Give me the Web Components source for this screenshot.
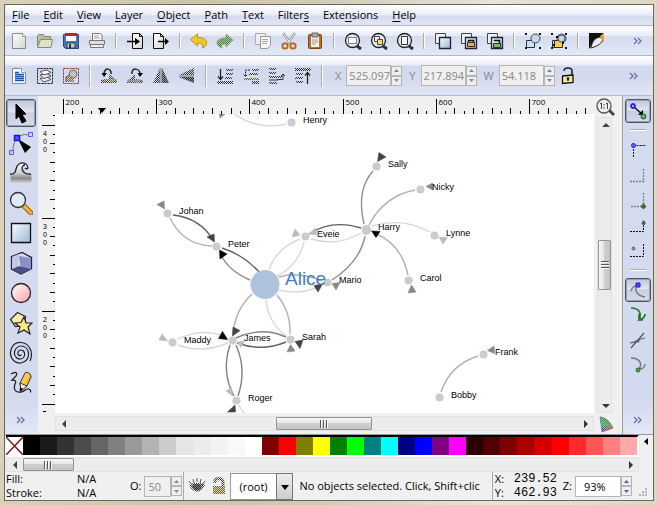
<!DOCTYPE html>
<html lang="en">
<head>
<meta charset="utf-8">
<title>Vector editor</title>
<style>
html{height:100%}
body{margin:0;height:100%;font:11px/16px "Open Sans","Noto Sans",sans-serif;color:#000;background:#c9bfa5}
</style>
</head>
<body>
<app-window></app-window>
<script>
const PAT = '<defs><pattern id="h" width="2" height="2" patternUnits="userSpaceOnUse"><path d="M0 0h1v1h-1zM1 1h1v1h-1z" fill="#333"/></pattern><pattern id="g" width="2" height="2" patternUnits="userSpaceOnUse"><path d="M0 0h2v2h-2z" fill="#a9c49c"/><path d="M0 0h1v1h-1zM1 1h1v1h-1z" fill="#4c8a3c"/></pattern><pattern id="y" width="2" height="2" patternUnits="userSpaceOnUse"><path d="M0 0h2v2h-2z" fill="#e5d8a5"/><path d="M0 0h1v1h-1zM1 1h1v1h-1z" fill="#6b6348"/></pattern></defs>';
const GR = '<defs><linearGradient id="b" x2="1" y2="1"><stop stop-color="#f8fcff"/><stop offset="1" stop-color="#9db8d6"/></linearGradient><linearGradient id="w" x2="1" y2="1"><stop stop-color="#fff"/><stop offset="1" stop-color="#d5d5d0"/></linearGradient><linearGradient id="o" x2="1" y2="1"><stop stop-color="#ffe680"/><stop offset="1" stop-color="#f09c10"/></linearGradient></defs>';
const LENS = '<path d="M14 15l4 3" stroke="#333" stroke-width="3"/><circle cx="9.500" cy="9.500" r="7" fill="#dbe9f6" stroke="#222" stroke-width="1.300"/>';
const DUP = '<path d="M2.500 2.500h10v10h-10z" fill="#e8f0f8" stroke="#444"/><path d="M6.500 6.500h11v11h-11z" fill="url(#b)" stroke="#223" stroke-width="1.300"/>';
const GRP = '<path d="M3.500 9.500h8v7h-8z" fill="#cfe0ee" stroke="#234"/><circle cx="12.500" cy="7.500" r="4.500" fill="#c4d8ea" stroke="#445"/><path d="M2 2h2v2H2zM16 2h2v2h-2zM2 16h2v2H2zM16 16h2v2h-2z" fill="#111"/>';
const DASH = 'fill="none" stroke="#111" stroke-dasharray="2 1"';
const ICONS = {
 new:'<path d="M3.500 2.500h10l3 3v12h-13z" fill="url(#w)" stroke="#8a8a88"/><path d="M13.500 2.500v3h3" fill="#fff" stroke="#999"/>',
 open:'<path d="M2.500 15V4.500l1-1h5l1 2h6v4" fill="#b9bea3" stroke="#858c70"/><path d="M5.500 8.500h12l-1.500 8H2.500z" fill="#dde0cd" stroke="#858c70"/>',
 save:'<path d="M2.500 3.500h15v14h-13l-2-2z" fill="#4277b0" stroke="#234b7c"/><path d="M4 2h12v3H4z" fill="#d01c1c"/><path d="M5 5h10v5H5z" fill="#fff"/><path d="M6 12h8v5H6z" fill="#ccc" stroke="#345"/><path d="M8 13h2v4H8z" fill="#234"/>',
 print:'<path d="M5.500 9V2.500h8l1.500 1.500V9" fill="#fff" stroke="#777"/><path d="M7 5h5M7 7h6" stroke="#999"/><path d="M2.500 9.500h15v4h-15z" fill="#ddd" stroke="#777"/><path d="M3.500 13.500h13v3h-13z" fill="#eee" stroke="#777"/>',
 import:'<path d="M7.500 2.500h7l3 3v12h-10z" fill="url(#w)" stroke="#111"/><path d="M14.500 2.500v3h3" fill="none" stroke="#111"/><path d="M2 10.500h9" stroke="#000" stroke-width="1.500"/><path d="M10 7l5 3.500L10 14z"/>',
 export:'<path d="M2.500 2.500h7l3 3v12h-10z" fill="url(#w)" stroke="#111"/><path d="M9.500 2.500v3h3" fill="none" stroke="#111"/><path d="M7 10.500h8" stroke="#000" stroke-width="1.500"/><path d="M14 7l4 3.500-4 3.500z"/>',
 undo:'<path d="M1.500 8.500L8.500 3v3.500c6 0 9 2 9 5.500 0 2-1.500 4-4 5 1-3-.5-5-5-5v3z" fill="#edca2c" stroke="#b8920c"/>',
 redo:'<path d="M18 9L11 3v4C5 7 2 9 2 12c0 2 2 4 5 5-1-3 0-4 4-4v3z" fill="url(#g)" stroke="#698c5c" stroke-width=".500"/>',
 copy:'<path d="M2.500 2.500h10v11h-10z" fill="#eee" stroke="#aaa"/><path d="M7.500 5.500h10v9l-3 3h-7z" fill="#f6f6f4" stroke="#999"/><path d="M9 8.500h6M9 10.500h6M9 12.500h5" stroke="#aaa"/>',
 cut:'<path d="M4 2l8 11M16 2L8 13" stroke="#999" stroke-width="2.500"/><path d="M4 2l8 11M16 2L8 13" stroke="#eee"/><rect x="3.500" y="12.500" width="5" height="5" rx="2" fill="none" stroke="#bb6d14" stroke-width="2"/><rect x="11.500" y="12.500" width="5" height="5" rx="2" fill="none" stroke="#bb6d14" stroke-width="2"/>',
 paste:'<rect x="3.500" y="3.500" width="13" height="14" rx="1" fill="#b8701c" stroke="#7d480e"/><path d="M6 5h8v11H6z" fill="#f3f3f0"/><path d="M7 2h6v4H7z" fill="#aaa" stroke="#666"/><path d="M7 9h6M7 11h6M7 13h4" stroke="#999"/>',
 zsel:LENS+'<path d="M5.500 6.500h8v6h-8z" fill="#fff" stroke="#111" stroke-dasharray="1 1"/>',
 zdraw:LENS+'<path d="M5.500 5.500h5v5h-5z" fill="#fff" stroke="#543"/><path d="M8.500 8.500h5v5h-5z" fill="#f8d868" stroke="#543"/>',
 zpage:LENS+'<path d="M6.500 5.500h6v8h-6z" fill="#fff" stroke="#333"/>',
 dup:DUP,
 clone:DUP+'<path d="M9.500 11V9.500h5V12" fill="none" stroke="#111" stroke-width="1.500"/><path d="M8.500 11.500h7v4h-7z" fill="#f5b020" stroke="#332"/>',
 unlink:DUP+'<path d="M9.500 10V9.500h5V12" fill="none" stroke="#111" stroke-width="1.500"/><path d="M8.500 12.500h7v4h-7z" fill="#7eba62" stroke="#232"/>',
 group:GRP,
 ungroup:GRP+'<path d="M5.500 9.500h8v7h-8z" fill="#f8cf4c" stroke="#332"/><circle cx="12.500" cy="7.500" r="3.500" fill="#c4d8ea" stroke="#445"/><path d="M7 5h2v2H7zM13 11h2v2h-2zM4 13h2v2H4z"/>',
 fill:'<path d="M2 2h15L6 12l-4 6z" fill="#111"/><path d="M4 17c1-7 4-10 9-11l3 3c-3 5-6 6-12 8z" fill="#e9ecec" stroke="#222"/><path d="M13 6l4-4v9z" fill="#f0a818"/>',
 page:'<path d="M3.500 2.500h9l4 4v11h-13z" fill="#f8fbff" stroke="#888"/><path d="M12.500 2.500v4h4" fill="#fff" stroke="#999"/><path d="M6 6.500h4M6 8.500h9M6 10.500h9M6 12.500h9M6 14.500h9" stroke="#1d55ac" stroke-width="1.300"/>',
 layers:'<path d="M2.500 2.500h15v15h-15z" '+DASH+'/><path d="M5 12.500l7-1.500 4 2.500-7 2.500z" fill="#eee" stroke="#555"/><path d="M5 9l7-1.500 4 2.500-7 2.500z" fill="#eee" stroke="#555"/><path d="M5 5.500L12 4l4 2.500L9 9z" fill="#fafafa" stroke="#555"/>',
 desel:'<path d="M2.500 2.500h15v15h-15z" fill="none" stroke="#922" stroke-dasharray="2 1"/><path d="M5 10h8v6H5z" fill="url(#y)"/><circle cx="12" cy="8" r="4" fill="#d8d8d8" stroke="#777"/><circle cx="12" cy="8" r="4" fill="url(#h)" opacity=".300"/><path d="M5 16v-5l4-2" fill="none" stroke="#555"/>',
 rccw:'<path d="M2 14l8-1v-5l8 7v2H2z" fill="url(#h)"/><path d="M3 13h15l-4 4z" fill="url(#y)"/><path d="M5 8c0-7 8-6 7 0" fill="none" stroke="#222" stroke-width="1.500"/><path d="M2.500 7H8l-3 4z"/>',
 rcw:'<path d="M18 14l-8-1V8l-8 7v2h16z" fill="url(#h)"/><path d="M2 14h15l-4 3z" fill="#999"/><path d="M7 8c-1-7 8-6 8 0" fill="none" stroke="#222" stroke-width="1.500"/><path d="M12.500 7H18l-3 4z"/>',
 fliph:'<path d="M9 2v15H2z" fill="url(#h)"/><path d="M11 2v15h7z" fill="#999"/><path d="M11 2v15h7z" fill="url(#h)"/><path d="M10 2v15" stroke="#777"/>',
 flipv:'<path d="M2 9L17 2v7z" fill="url(#h)"/><path d="M2 11h15v6z" fill="#888"/><path d="M2 10h15" stroke="#777"/><path d="M2 11h15v6z" fill="url(#h)"/>',
 lower:'<path d="M11 3h7v2h-7zM11 7h7v2h-7zM10 11h7v2h-7zM2 15h16v3H2z" fill="url(#h)"/><path d="M5.500 3v10M3 10.500l2.500 3 2.500-3" fill="none" stroke="#222" stroke-width="1.300"/>',
 down:'<path d="M11 3h7v2h-7zM8 7h9v2H8zM11 15h7v3h-7z" fill="url(#h)"/><path d="M3 12h15v2H3z" fill="url(#y)"/><path d="M9 4H4.500v6M2.500 8.500l2 2 2-2" fill="none" stroke="#222" stroke-dasharray="2 1"/>',
 up:'<path d="M2 2h7v2H2zM2 6h7v2H2zM2 10h13v2H2zM2 16h8v2H2z" fill="url(#h)"/><path d="M2 14h9M10 13.500h6V9M14 10l2-2 2 2" fill="none" stroke="#333"/>',
 raise:'<path d="M2 2h16v3H2zM3 7h7v2H3zM2 11h8v2H2zM3 15h7v2H3z" fill="url(#h)"/><path d="M14.500 18V7M12 9.500l2.500-3 2.500 3" fill="none" stroke="#222" stroke-width="1.300"/>',
 unlock:'<path d="M6 5c0-4 8-4 8 0v5" fill="none" stroke="#222" stroke-width="1.600"/><path d="M4.500 10l10.500-1v7.500l-10.500 1z" fill="#f6e6a8" stroke="#111" stroke-width="1.300"/><path d="M8.500 11.500h3l-1 3.500h-1z" fill="#111"/>',
 arrow:'<path d="M7 3l10 10-4 .500 4 6.500-4 2-3-7-3 3z" stroke="#000"/>',
 node:'<path d="M4 19C4 8 11 2 20 4" fill="none" stroke="#777"/><path d="M9 8l13 8-6 6z"/><path d="M5.500 4.500h5v5h-5z" fill="#4c58ff" stroke="#1414ee" stroke-width="1.500"/><path d="M19.500 1.500h4v4h-4zM.500 19.500h4v4h-4z" fill="#c7cbff" stroke="#5b5be8"/>',
 tweak:'<path d="M1.500 22.500V13c8 1 4-7 9-10 5-3 9 1 8 4-2-3-6-1-5 1 1 3 5 6 9 5v9.500z" fill="url(#tw)" stroke="none"/><path d="M1 13c8 1 4-7 9-10 5-3 9 1 9 4-1 1-2 1-3 0M22 13c-6 1-9-3-9-6 0-1 1-3 3-3" fill="none" stroke="#222" stroke-width="1.300"/><defs><linearGradient id="tw" x2="0" y2="1"><stop stop-color="#fff"/><stop offset=".500" stop-color="#ccc"/><stop offset=".750" stop-color="#888"/><stop offset="1" stop-color="#ddd"/></linearGradient></defs>',
 zoom:'<path d="M15 15l7 7" stroke="#8f5c0e" stroke-width="5" stroke-linecap="round"/><path d="M15 15l7 7" stroke="#f8b330" stroke-width="3" stroke-linecap="round"/><circle cx="9" cy="9" r="7.500" fill="#dfeaf8" stroke="#333" stroke-width="1.300"/>',
 rect:'<path d="M2.500 2.500h19v19h-19z" fill="url(#b)" stroke="#111" stroke-width="1.300"/>',
 cube:'<path d="M2.500 5.500L13 1.500l9.500 5v11L12 23l-9.500-5z" fill="#dcdff2" stroke="#223" stroke-width="1.300"/><path d="M10 5l12 2v11L12 21z" fill="#8d90c4"/><path d="M9.500 15L22 18l-10 5-9-5z" fill="#4b4e8c"/><path d="M9.500 3v12L3 18V6z" fill="#c4c7e8"/>',
 circle:'<circle cx="12" cy="12" r="9.500" fill="url(#pk)" stroke="#222" stroke-width="1.300"/><defs><linearGradient id="pk" x2="1" y2="1"><stop stop-color="#fff"/><stop offset="1" stop-color="#ff9eaa"/></linearGradient></defs>',
 star:'<path d="M8.500 1.500l8 4-1 9-9 1-5-7z" fill="#f5eab0" stroke="#222" stroke-width="1.200"/><path d="M15 6l2 6h6l-4 4 2 7-6-4-6 3 2-6-5-4 6-.500z" fill="#fbe986" stroke="#222" stroke-width="1.200"/>',
 spiral:'<path d="M21 20C25 11 20 2 12 1.500 5 1 1 7 1.500 13 2 19 7 22.500 12 22c5-.500 8-5 7.500-10C19 8 16 5 12 5c-4 0-7 4-6.500 8 .500 3 3 5.500 6 5 3-.500 4.500-3 4-6-.500-2-2-3-3.500-3-2 0-3.500 2-3 4 .500 2 3 2 3.500.500" fill="none" stroke="#222" stroke-width="1.200"/>',
 pencil:'<path d="M2 3c5-3 7-1 5 2L3 9c3 0 5 1 3 4-2 6 1 9 6 8 3 0 5-4 8-3 2 1 2 3 1 3" fill="none" stroke="#222" stroke-width="1.300"/><path d="M16 2c3-2 6 1 6 4l-4 9-6 4-1-7z" fill="url(#o)" stroke="#333"/><path d="M11 12l7 3-6 5z" fill="#fff3cc" stroke="#333"/><path d="M11.500 17l2 1-2.500 2z" stroke="#000"/>',
 z11:'<path d="M14 13l5 5" stroke="#444" stroke-width="3"/><circle cx="9" cy="9" r="7" fill="#eee" stroke="#555" stroke-width="1.300"/><path d="M5 7l1.500-1v6M11 7l1.500-1v6M9 7v1.500M9 10v1.500" fill="none" stroke="#444"/>',
 cms:'<path d="M5 3c6 0 10 5 13 11L7 18z" fill="#3b9b53"/><path d="M5 3l4 14-2 1z" fill="#38c1c8"/><path d="M10 12l8 2-8 3z" fill="#d33752"/><path d="M7 12l3 4-3 2z" fill="#434fc3"/><path d="M5 3c6 0 10 5 13 11L7 18z" fill="url(#cp)" stroke="#666" stroke-width=".600"/><defs><pattern id="cp" width="2" height="2" patternUnits="userSpaceOnUse"><path d="M0 0h1v1h-1zM1 1h1v1h-1z" fill="#ddd" opacity=".500"/></pattern></defs>',
 snap:'<path d="M6 6l9 8" stroke="#111" stroke-width="1.500"/><path d="M15 9v5h-5z"/><circle cx="5" cy="5" r="2" fill="#bcbcff" stroke="#2222e8" stroke-width="1.800"/><circle cx="15.500" cy="15.500" r="2" fill="#bfd8bf" stroke="#288438" stroke-width="1.800"/>',
 s1:'<path d="M5.500 4.500H18M5.500 5v12" '+DASH+'/><circle cx="5.500" cy="4.500" r="2" fill="#6464ff" stroke="#2222e0"/>',
 s2:'<path d="M15.500 3v12.500H2" fill="none" stroke="#6a8a6a" stroke-width="1.300" stroke-dasharray="2 1"/>',
 s3:'<path d="M15.500 2v13.500H2" fill="none" stroke="#788478" stroke-width="1.300" stroke-dasharray="2 1"/><path d="M15.500 12l3 3.500-3 3-3-3z" fill="#3f6a3f"/>',
 s4:'<path d="M2 15.500h13.500V5" '+DASH+'/><path d="M15.500 4l2.500 3-2.500 3-2-3z" fill="#3f6a3f"/>',
 s5:'<path d="M2 15.500h13.500V3" '+DASH+'/><circle cx="5.500" cy="7.500" r="1.500" fill="#8ab08a" stroke="#3f6a3f"/>',
 c1:'<path d="M3 11c1-4 4-6 8-5M10 5c-5 4-1 11 7 12" fill="none" stroke="#777" stroke-width="1.400"/><path d="M8 3h4v4H8z" fill="#4646ff" stroke="#2020c0"/>',
 c2:'<path d="M3 3c8 0 11 5 8 12 4-1 6-3 6-6M11 9v6h4" fill="none" stroke="#1d7b26" stroke-width="1.700"/>',
 c3:'<path d="M3 18L16 3M2 13c6 0 9-5 15-5" fill="none" stroke="#556" stroke-width="1.200"/><circle cx="10" cy="11" r="1.500" fill="#486a48"/>',
 c4:'<path d="M3 3c8 0 12 5 8 11 4 0 6-2 6-5" fill="none" stroke="#777" stroke-width="1.400"/><circle cx="10" cy="15" r="2" fill="#4fa05c" stroke="#246a38"/>',
 eye:'<path d="M2 9c4 9 12 9 16 0l-4-2-8 0z" fill="url(#h)"/><path d="M5 10c2 6 8 6 10 0-2-3-8-3-10 0z" fill="#777"/><path d="M2 5l3 4M6 3l1 4M10 2v4M14 3l-1 4M18 5l-3 4" stroke="#555"/><path d="M5 10c2 6 8 6 10 0-2-3-8-3-10 0z" fill="url(#h)"/>',
 dlock:'<path d="M6 7V5c1-4 8-3 8 1v4" fill="none" stroke="url(#h)" stroke-width="3"/><path d="M4 10h12v8H4z" fill="url(#y)"/>',
};
const define=(n,c)=>customElements.define(n,c);
class Base extends HTMLElement{
  constructor(){super();this.attachShadow({mode:'open'})}
  connectedCallback(){this.shadowRoot.innerHTML=this.view()}
  a(n,d=''){return this.getAttribute(n)??d}
}
define('ui-icon',class extends Base{view(){const s=this.a('size','20');
  return `<style>:host{display:block;width:${s}px;height:${s}px}svg{display:block}</style><svg width="${s}" height="${s}" viewBox="0 0 ${s} ${s}" aria-hidden="true">${GR}${PAT}${ICONS[this.a('name')]}</svg>`}});
define('tool-button',class extends Base{view(){return `<style>
:host{display:block;flex:none}button{width:26px;height:24px;padding:0;border:0;background:none;display:grid;place-items:center;box-sizing:border-box;border-radius:3px}
:host([big]) button{width:30px;height:30px}
:host([snap]) button{width:26px;height:25px}
:host([small]) button{width:22px}
button[aria-pressed=true]{border:1px solid #4d5462;outline:1px solid #9aa1b5;outline-offset:-2px;background:linear-gradient(#bfc6da,#e0e4ef 45%,#c8cee0 50%,#d5dbeb)}
:host([big]) button[aria-pressed=true]{height:28px;margin:1px 0}
:host([snap]) button[aria-pressed=true]{height:24px}
</style><button type="button" aria-label="${this.a('icon')}" ${this.hasAttribute('on')?'aria-pressed="true"':''}><ui-icon name="${this.a('icon')}" size="${this.hasAttribute('big')?24:20}"></ui-icon></button>`}});
define('more-button',class extends Base{view(){return `<style>:host{display:block}button{display:block;border:0;background:none;padding:0;width:30px;height:20px}svg{display:block;margin:auto}</style><button type="button" aria-label="More tools"><svg width="10" height="8"><path d="M1 1l3 3-3 3M5 1l3 3-3 3" fill="none" stroke="#6a6fa8" stroke-width="1.300"/></svg></button>`}});
define('menu-bar',class extends Base{view(){const m=['_File','_Edit','_View','_Layer','_Object','_Path','_Text','Filter_s','Exte_nsions','_Help'];
 return `<style>:host{display:flex;height:21px;box-sizing:border-box;border-bottom:1px solid #b0b8d2;background:linear-gradient(#fff,#e8ecf7 52%,#d5dbee 53%,#e1e6f5)}
 nav{display:flex;align-items:center}button{border:0;background:none;font:inherit;color:inherit;padding:0 7px;height:20px;line-height:20px}u{text-underline-offset:2px}</style><nav>${m.map(t=>`<button type="button">${t.replace(/_(.)/,'<u>$1</u>')}</button>`).join('')}</nav>`}});
define('tool-bar',class extends Base{view(){return `<style>:host{display:flex;align-items:center;height:30px;box-sizing:border-box;padding-left:1px;border-bottom:1px solid #b0b8d2;background:linear-gradient(#fff,#e8ecf7 33%,#d5dbee 34%,#e3e8f6)}
 :host([tall]){height:40px;background:linear-gradient(#fff,#eef1f9 20%,#e2e7f5 24%,#d2d8ed 26%,#d5dbee 60%,#e0e5f5)}
 :host([tall]) ::slotted(more-button){margin-right:4px}
 ::slotted(i){width:2px;height:16px;margin:0 5px;background:linear-gradient(90deg,#aaa 50%,#fff 50%)}
 :host([tall]) ::slotted(i){height:22px}
 ::slotted(more-button){margin-left:auto}</style><slot></slot>`}});
define('num-field',class extends Base{view(){const w=this.a('w','45'),off=this.hasAttribute('off');return `<style>
:host{display:flex;align-items:center}:host([off]){color:#888}label{padding:0 5px 0 7px;line-height:20px}
:host([compact]) label{padding-right:3px;color:#000}
input{width:${w}px;height:21px;box-sizing:border-box;border:1px solid #b5b5b5;background:${off?'#f0f0f0':'#fff'};font:inherit;color:inherit;padding:0 0 0 2px;border-radius:0;margin:0}
:host([compact]) input{padding-left:3px}
:host([wide]) input{padding-left:8px}
span{display:grid;width:11px}button{padding:0;border:1px solid #b5b5b5;background:#eee;height:10px;width:11px;display:grid;place-items:center}
svg{display:block}</style><label for="f">${this.a('label')}</label><input id="f" value="${this.a('value')}"><span><button type="button" aria-label="Increase"><svg width="5" height="3"><path d="M0 3L2.500 0 5 3z" fill="${off?'#888':'#5661a8'}"/></svg></button><button type="button" aria-label="Decrease"><svg width="5" height="3"><path d="M0 0h5L2.500 3z" fill="${off?'#888':'#5661a8'}"/></svg></button></span>`}});
define('scroll-bar',class extends Base{view(){const v=this.hasAttribute('vertical');return `<style>
:host{display:flex;flex-direction:${v?'column':'row'};background:#ececec;box-sizing:border-box;border:1px solid #e2e2e2}
button{flex:none;width:15px;height:13px;padding:0;border:0;background:none;display:grid;place-items:center}
div{flex:1;display:flex;flex-direction:inherit}
div:before{content:"";flex:${this.a('before')}}div:after{content:"";flex:${this.a('after')}}
b{flex:${this.a('thumb')};box-sizing:border-box;border:1px solid #949494;border-radius:1px;display:grid;place-items:center;background:linear-gradient(${v?'90deg':'180deg'},#f6f6f6,#e4e4e5 45%,#cfcfd1 50%,#c4c4c7)}
b:before{content:"";width:8px;height:8px;background:repeating-linear-gradient(${v?'180deg':'90deg'},#555 0 1px,#fff 1px 2px,transparent 2px 3px)}</style>
<button type="button" aria-label="Back"><svg width="8" height="8"><path d="${v?'M0 6l4-4 4 4z':'M6 0L2 4l4 4z'}" fill="#444"/></svg></button><div><b></b></div><button type="button" aria-label="Forward"><svg width="8" height="8"><path d="${v?'M0 2l4 4 4-4z':'M2 0l4 4-4 4z'}" fill="#333"/></svg></button>`}});
define('ruler-bar',class extends Base{view(){const v=this.hasAttribute('vertical');let s='';
 for(let k=v?-1:0;k<(v?31:58);k++){const p=Math.round(v?10.500+k*9.300:8+k*9.320)+.500,maj=k%10===0,l=maj?(v?14:15):(k%2?3:6);
  s+=v?`<path d="M${18-l} ${p}h${l}"/>`:`<path d="M${p} ${18-l}v${l}"/>`;
  if(maj&&!(v&&k>29)){const n=String(v?400-k*10:200+k*10);s+=v?[...n].map((c,i)=>`<text x="5" y="${p+10+i*8}">${c}</text>`).join(''):`<text x="${p+2}" y="9">${n}</text>`}}
 return `<style>:host{display:block;overflow:hidden;min-height:0;background:#f0f0f0}svg{display:block;width:100%;height:100%}path{stroke:#000}text{font:${v?'7px "Liberation Sans"':'8px "Open Sans"'},sans-serif}polygon{fill:#000}</style><svg>${s}${v?'<path d="M5 297.500h3"/>':'<polygon points="43,12 51,12 47,17"/>'}</svg>`}});
const NODES=[['Henry',291,122],['Johan',167,213],['Peter',216,246],['Eveie',305,236],['Sally',376,166],['Nicky',420,189],['Lynne',434,235],['Carol',408,280],['Mario',327,282],['James',232,340],['Sarah',290,339],['Maddy',172,342],['Roger',236,400],['Frank',483,354],['Bobby',439,397]];
const EDGES=[['d8','286 124Q256 131 232 112'],['60','173 215Q200 218 213 240'],['b4','170 218Q183 245 212 246'],['60','222 248Q244 255 259 272'],['88','250 280Q229 271 221 255'],['d8','300 239Q277 248 269 269'],['d8','304 242Q298 266 277 276'],['60','309 234Q332 219 361 228'],['d8','311 239Q338 247 361 233'],['90','364 224Q356 190 373 171'],['b0','369 225Q384 196 415 190'],['d8','372 226Q402 217 430 232'],['b0','374 233Q401 243 408 275'],['90','365 236Q360 262 332 280'],['b0','279 277Q298 271 322 281'],['d8','279 290Q300 295 318 287'],['b0','252 294Q235 310 233 334'],['b0','277 295Q291 312 290 334'],['d8','266 300Q269 324 286 336'],['80','236 338Q262 326 286 337'],['60','237 343Q262 352 286 342'],['d8','178 339Q202 327 226 337'],['d8','178 345Q202 354 228 343'],['80','230 345Q221 372 234 396'],['80','236 345Q247 370 238 396'],['d8','239 405Q242 411 248 418'],['b0','441 392Q450 365 478 356']];
const HEADS=[['88','157,204.500 164,201 164.500,209'],['44','207,237 214,234 214.500,242'],['00','219.500,250 220,259 227,254'],['bb','292,237 295,229 300,235'],['bb','309,234 315,228 317,235'],['44','379,152.500 386,157 377.500,161.500'],['88','426,186.500 432.500,183 433,190'],['00','371.500,231 380,231.500 376,237.500'],['bb','439,237 447.500,237.500 443,244'],['88','411.500,285 416,292 408,293'],['44','314,285.500 322.500,284 318,292'],['88','332,283.500 340,282.500 336,290'],['00','218.500,338.500 222.500,331.500 227.500,339.500'],['44','233,327 240,330.500 232.500,336'],['bb','237,342 244.500,341 241,347.500'],['44','295,341.500 303,340 300,348.500'],['88','290.500,344.500 295,351 287,352'],['bb','159,340 162,334 167.500,341'],['bb','226,391 231.500,387.500 232.500,396'],['44','227.500,412 235,405 235.500,412'],['88','487.500,350.500 494,346 494.500,353.500'],['88','219,113 225,114 220,118']];
define('graph-canvas',class extends Base{view(){const c=x=>'#'+x+x+x;return `<style>:host{display:block;background:#fff;overflow:hidden;min-height:0}svg{display:block;width:100%;height:100%}
 text{font:9px "Liberation Sans",Arial,sans-serif}.e path{fill:none;stroke-width:1.400}polygon{stroke-width:.600}.big{font-size:19px;fill:#4080bb}</style>
 <svg role="img" aria-label="Graph of people"><g transform="translate(-55 -114)"><g class="e">${EDGES.map(e=>`<path d="M${e[1]}" stroke="${c(e[0])}"/>`).join('')}</g>
 ${HEADS.map(h=>`<polygon points="${h[1]}" fill="${c(h[0])}" stroke="${c(h[0])}"/>`).join('')}
 ${NODES.map(n=>`<circle cx="${n[1]+.500}" cy="${n[2]+.500}" r="4" fill="#cbcbcb"/>`).join('')}<circle cx="366.500" cy="230" r="5" fill="#cbcbcb"/><circle cx="265" cy="284.500" r="14.500" fill="#b0c3de"/>
 ${NODES.map(n=>`<text x="${n[1]+12}" y="${n[2]+1}">${n[0]}</text>`).join('')}<text x="378" y="230">Harry</text><text class="big" x="285" y="285">Alice</text></g></svg>`}});
define('colour-palette',class extends Base{view(){const g=['000','1a1a1a','333','4d4d4d','666','808080','999','b3b3b3','ccc','e6e6e6','ececec','f2f2f2','f9f9f9','fff','800000','f00','808000','ff0','008000','0f0','008080','0ff','000080','00f','800080','f0f','2b0000','550000','800000','aa0000','d40000','f00','ff2a2a','ff5555','ff8080','ffaaaa'];
 return `<style>:host{display:block;background:#f0f0f0;border-top:1px solid #999}
 .r{display:flex;height:22px}.s{flex:1;display:flex;border-top:2px solid #000;padding-bottom:2px;margin-left:1px;border-right:2px solid #fff;background:#fff}
 button{flex:1;border:0;padding:0}.n{background:#fff}.n svg{display:block;width:100%;height:100%}.m{flex:none;width:14px;background:none;display:grid;place-items:center;height:12px;padding:0}
 scroll-bar{margin:0 14px 0 1px;height:15px}</style>
 <div class="r"><div class="s"><button type="button" class="n" aria-label="None"><svg viewBox="0 0 17 18" preserveAspectRatio="none"><path d="M0 0l17 18M17 0L0 18" stroke="#7c1c1c" stroke-width="1.500"/></svg></button>${g.map(c=>`<button type="button" aria-label="#${c}" style="background:#${c}"></button>`).join('')}</div><button type="button" class="m" aria-label="Palette menu"><svg width="4" height="7"><path d="M4 0v7L0 3.500z"/></svg></button></div>
 <scroll-bar before="1" thumb="49" after="550"></scroll-bar>`}});
define('status-bar',class extends Base{view(){return `<style>:host{display:flex;align-items:center;height:28px;background:#f0f0f0;overflow:hidden}
 dl{display:grid;grid-template:14px 14px / 71px 46px;margin:0 0 0 1px;line-height:14px}dd,dt{margin:0}
 i{width:1px;height:28px;background:#aaa;margin:0 2px 0 1px}
 select{width:63px;height:27px;flex:none;box-sizing:border-box;border:1px solid #999;border-radius:0;appearance:none;background:#fff;font:11px "Open Sans",sans-serif;padding:0 0 0 8px;color:#000}
 .c{display:grid}.c>*{grid-area:1/1}.c svg{justify-self:end;pointer-events:none;background:linear-gradient(#eee,#ccc);box-shadow:inset 0 0 0 1px #777}
 p{flex:1;min-width:0;margin:0 0 0 6px;white-space:nowrap;overflow:hidden}
 output{display:grid;grid-template:14px 14px / 19px 42px;line-height:14px;white-space:nowrap}output b{font:12px/14px "Liberation Mono",monospace}
 .g{margin:auto 5px 3px 7px}.g path{fill:#b5b5b5}</style>
 <dl><dt>Fill:</dt><dd>N/A</dd><dt>Stroke:</dt><dd>N/A</dd></dl>
 <num-field compact label="O:" value="50" w="27" off></num-field><i></i>
 <tool-button small icon="eye"></tool-button><tool-button small icon="dlock"></tool-button>
 <div class="c"><select aria-label="Current layer"><option>(root)</option></select><svg width="17" height="27"><path d="M5 12h8l-4 5z"/></svg></div>
 <p>No objects selected. Click, Shift+clic</p><i></i>
 <output><span>X:</span><b>239.52</b><span>Y:</span><b>462.93</b></output>
 <num-field compact label="Z:" value="93%" w="46" wide></num-field>
 <svg class="g" width="9" height="9"><path d="M6 0h2v2H6zM3 3h2v2H3zM6 3h2v2H6zM0 6h2v2H0zM3 6h2v2H3zM6 6h2v2H6z"/></svg>`}});
define('app-window',class extends Base{view(){const b=l=>l.split(' ').map(n=>n==='|'?'<i></i>':`<tool-button icon="${n}"></tool-button>`).join('');
 return `<style>:host{display:flex;flex-direction:column;height:100vh;min-height:300px;box-sizing:border-box;padding:4px;background:linear-gradient(90deg,#d8d0b8,#cdc3a8 30%,#d2ccb8 50%,#e6e3d8 75%,#ddd6c2)}
 .win{flex:1;min-height:0;display:flex;flex-direction:column;border:1px solid #6a665c;background:#f0f0f0}
 .win>*{flex:none}.win>main{flex:1;min-height:0;display:grid;grid-template-columns:33px 1fr 31px}
 .rail{background:linear-gradient(#d5dbef,#d3d9ee 90%,#e3e8f6);display:flex;flex-direction:column;align-items:center;padding-top:2px;box-sizing:border-box;min-height:0;overflow:hidden}
 .l{padding-right:1px}
 .rail more-button{margin:auto 0 4px}
 .r{border-left:1px solid #a0a0a0;padding-top:3px}
 .rail hr{width:16px;height:2px;border:0;flex:none;margin:6px 0 7px;background:linear-gradient(#aaa 50%,#fff 50%)}
 .work{display:grid;grid-template:18px minmax(0,1fr) 21px / 17px minmax(0,1fr) 28px;min-height:0;min-width:0}
 .v{margin:3px 10px 0 3px;width:15px}.hs{margin:3px 0 3px;height:15px}
 ui-icon{margin:1px 0 0 1px}</style>
 <div class="win"><menu-bar></menu-bar>
 <tool-bar>${b('new open save print | import export | undo redo | copy cut paste | zsel zdraw zpage | dup clone unlink | group ungroup | fill')}<more-button></more-button></tool-bar>
 <tool-bar tall>${b('page layers desel | rccw rcw fliph flipv | lower down up raise |')}<num-field off label="X" value="525.097"></num-field><num-field off label="Y" value="217.894"></num-field><num-field off label="W" value="54.118"></num-field>${b('unlock')}<more-button></more-button></tool-bar>
 <main><div class="rail l">${'arrow node tweak zoom rect cube circle star spiral pencil'.split(' ').map((n,i)=>`<tool-button big icon="${n}" ${i?'':'on'}></tool-button>`).join('')}<more-button></more-button></div>
 <div class="work"><span></span><ruler-bar></ruler-bar><ui-icon name="z11"></ui-icon>
 <ruler-bar vertical></ruler-bar><graph-canvas></graph-canvas><scroll-bar class="v" vertical before="107" thumb="48" after="107"></scroll-bar>
 <span></span><scroll-bar class="hs" before="206" thumb="94" after="207"></scroll-bar><ui-icon name="cms"></ui-icon></div>
 <div class="rail r"><tool-button snap on icon="snap"></tool-button><hr>${'s1 s2 s3 s4 s5'.split(' ').map(n=>`<tool-button snap icon="${n}"></tool-button>`).join('')}<hr><tool-button snap on icon="c1"></tool-button>${'c2 c3 c4'.split(' ').map(n=>`<tool-button snap icon="${n}"></tool-button>`).join('')}<more-button></more-button></div></main>
 <colour-palette></colour-palette><status-bar></status-bar></div>`}});
</script>
</body>
</html>
